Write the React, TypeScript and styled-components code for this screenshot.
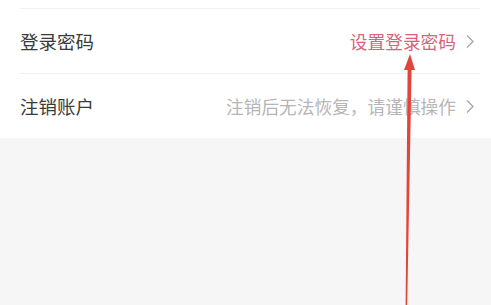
import styled, { createGlobalStyle } from "styled-components";

const GlobalStyle = createGlobalStyle`
  html, body {
    margin: 0;
    padding: 0;
    background: #f6f6f6;
  }
  body {
    font-family: "Noto Sans CJK SC", "Noto Sans", sans-serif;
  }
`;

const Page = styled.div`
  position: relative;
  width: 491px;
  height: 305px;
  background: #f6f6f6;
  overflow: hidden;
`;

const List = styled.div`
  background: #fff;
  padding: 0 11px 0 20px;
`;

const Row = styled.div`
  display: flex;
  align-items: center;
  justify-content: space-between;
  height: 64px;
  padding-right: 6px;
  border-top: 1px solid #efefef;
`;

const TopGap = styled.div`
  height: 8px;
`;

const Label = styled.span`
  font-size: 18.5px;
  color: #3a3a3a;
`;

const Value = styled.span<{ $accent?: boolean }>`
  display: flex;
  align-items: center;
  gap: 10px;
  font-size: 17.7px;
  color: ${(p) => (p.$accent ? "#d8627c" : "#b6b6b6")};
`;

const Chevron = () => (
  <svg width="8" height="15" viewBox="0 0 8 15">
    <path d="M1 1.5l6 6-6 6" fill="none" stroke="#a8a8a8" strokeWidth="1.4" />
  </svg>
);

const Arrow = styled.svg`
  position: absolute;
  left: 0;
  top: 0;
  pointer-events: none;
`;

export default function App() {
  return (
    <>
      <GlobalStyle />
      <Page>
        <List>
          <TopGap />
          <Row>
            <Label>登录密码</Label>
            <Value $accent>
              设置登录密码
              <Chevron />
            </Value>
          </Row>
          <Row>
            <Label>注销账户</Label>
            <Value>
              注销后无法恢复，请谨慎操作
              <Chevron />
            </Value>
          </Row>
        </List>
        <Arrow width="491" height="305" viewBox="0 0 491 305">
          <polygon points="404,70 410,54 415,70" fill="#e2453c" />
          <polygon points="407.6,68 411.6,68 407.2,305 405.6,305" fill="#e2453c" />
        </Arrow>
      </Page>
    </>
  );
}
